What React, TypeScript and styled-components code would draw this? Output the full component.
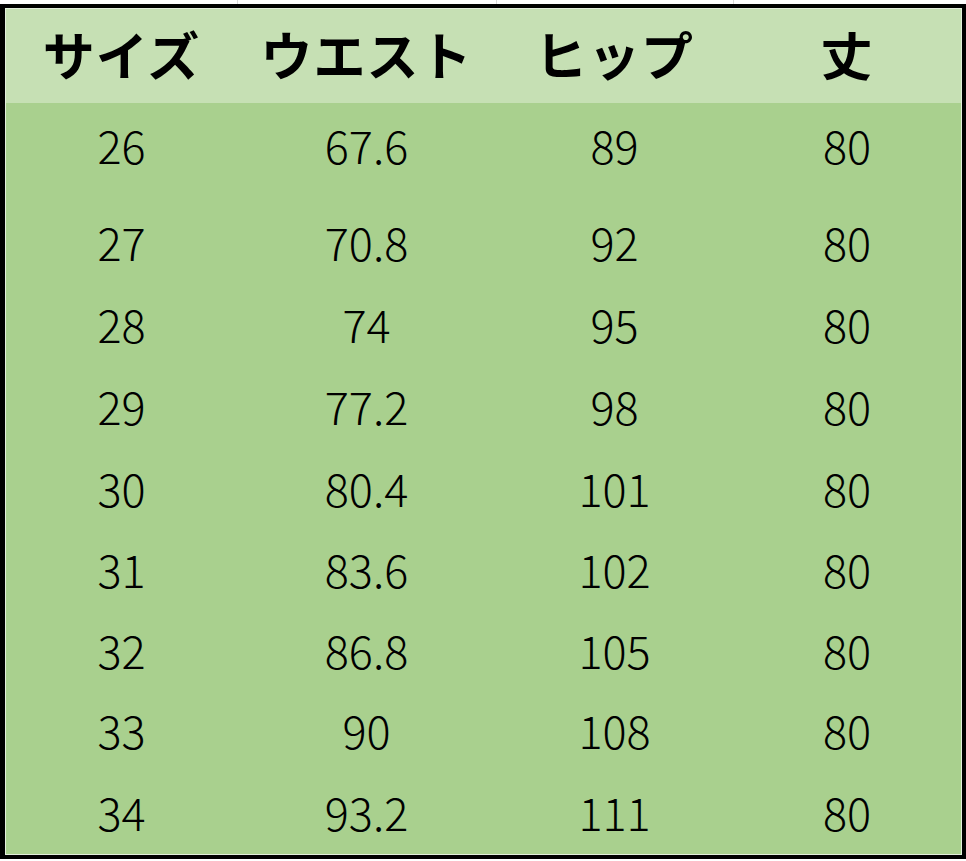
import React from "react";
import styled, { createGlobalStyle } from "styled-components";

const GlobalStyle = createGlobalStyle`
  html, body {
    margin: 0;
    padding: 0;
    background: #ffffff;
  }
  body {
    font-family: "Noto Sans CJK JP", "Noto Sans", sans-serif;
  }
`;

const COLUMNS = "231px 259px 237px 228px";

const headers = ["サイズ", "ウエスト", "ヒップ", "丈"];

type SizeRow = {
  size: string;
  waist: string;
  hip: string;
  length: string;
  height: number;
  shift?: number;
};

// shift: vertical nudge of the text (negative = up)
const rows: SizeRow[] = [
  { size: "26", waist: "67.6", hip: "89", length: "80", height: 93, shift: -10 },
  { size: "27", waist: "70.8", hip: "92", length: "80", height: 90, shift: 0 },
  { size: "28", waist: "74", hip: "95", length: "80", height: 82, shift: -8 },
  { size: "29", waist: "77.2", hip: "98", length: "80", height: 82, shift: -8 },
  { size: "30", waist: "80.4", hip: "101", length: "80", height: 82, shift: -8 },
  { size: "31", waist: "83.6", hip: "102", length: "80", height: 81, shift: -8 },
  { size: "32", waist: "86.8", hip: "105", length: "80", height: 80, shift: -8 },
  { size: "33", waist: "90", hip: "108", length: "80", height: 81, shift: -8 },
  { size: "34", waist: "93.2", hip: "111", length: "80", height: 80, shift: -6 },
];

const Page = styled.div`
  width: 966px;
  height: 861px;
  background: #ffffff;
  overflow: hidden;
`;

const GridStrip = styled.div`
  display: grid;
  grid-template-columns: 6px ${COLUMNS};
  height: 4px;
`;

const GridLine = styled.div<{ $line?: boolean }>`
  border-left: ${(p) => (p.$line ? "1px solid #d9d9d9" : "none")};
`;

const SheetBox = styled.div`
  width: 966px;
  box-sizing: border-box;
  border-style: solid;
  border-color: #000000;
  border-width: 4px 4px 4px 5px;
  padding: 1px;
  background: #e4efdc;
`;

const Row = styled.div<{ $height: number }>`
  display: grid;
  grid-template-columns: ${COLUMNS};
  height: ${(p) => p.$height}px;
`;

const HeaderRow = styled(Row)`
  background: #c6e0b4;
`;

const BodyRow = styled(Row)`
  background: #a9d08e;
`;

const HeaderCell = styled.div`
  display: flex;
  align-items: center;
  justify-content: center;
  font-family: "Noto Sans CJK JP", sans-serif;
  font-weight: 700;
  font-size: 52px;
  line-height: 1;
  color: #000000;
  letter-spacing: 1px;
  padding-bottom: 4px;
`;

const Cell = styled.div<{ $shift: number }>`
  display: flex;
  align-items: center;
  justify-content: center;
  font-family: "Noto Sans CJK JP", sans-serif;
  font-weight: 300;
  font-size: 45px;
  line-height: 1;
  color: #000000;
  padding-top: ${(p) => (p.$shift > 0 ? p.$shift : 0)}px;
  padding-bottom: ${(p) => (p.$shift < 0 ? -p.$shift : 0)}px;
`;

export default function App() {
  return (
    <Page>
      <GlobalStyle />
      <GridStrip>
        <GridLine />
        <GridLine />
        <GridLine $line />
        <GridLine $line />
        <GridLine $line />
      </GridStrip>
      <SheetBox>
        <HeaderRow $height={94}>
          {headers.map((h) => (
            <HeaderCell key={h}>{h}</HeaderCell>
          ))}
        </HeaderRow>
        {rows.map((r) => (
          <BodyRow key={r.size} $height={r.height}>
            <Cell $shift={r.shift ?? 0}>{r.size}</Cell>
            <Cell $shift={r.shift ?? 0}>{r.waist}</Cell>
            <Cell $shift={r.shift ?? 0}>{r.hip}</Cell>
            <Cell $shift={r.shift ?? 0}>{r.length}</Cell>
          </BodyRow>
        ))}
      </SheetBox>
    </Page>
  );
}
